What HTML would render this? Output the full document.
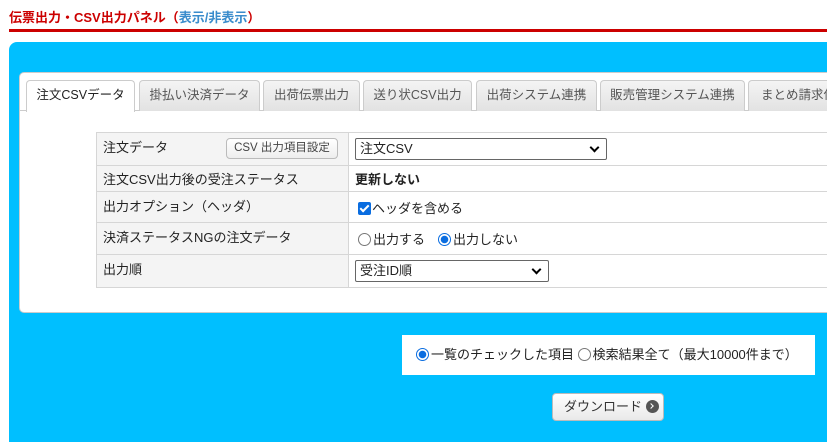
<!DOCTYPE html>
<html><head><meta charset="utf-8"><style>
*{box-sizing:border-box}
body{margin:0;width:827px;height:432px;overflow:hidden;background:#fff;font-family:"Liberation Sans","Noto Sans CJK JP",sans-serif;font-size:13px;color:#222;position:relative}
.title{position:absolute;left:9px;top:7px;font-size:13px;font-weight:bold;color:#c00}
.title span{color:#3a8ccc}
.rline{position:absolute;left:9px;top:29px;width:818px;height:3px;background:#c00}
.blue{position:absolute;left:9px;top:42px;width:830px;height:400px;background:#00bfff;border-radius:8px 0 0 0}
.inner{position:absolute;left:19px;top:72px;width:820px;height:241px;background:#fff;border:1px solid #ccc;border-radius:5px}
.tabs{position:absolute;left:0;top:0;width:100%;height:38px;}
.tab{position:absolute;top:7px;height:31px;border:1px solid #ccc;border-bottom:none;border-radius:4px 4px 0 0;background:linear-gradient(#f4f4f4,#e2e2e2);color:#555;text-align:center;line-height:29px;font-size:12.5px;white-space:nowrap;overflow:hidden}
.tab.act{background:#fff;color:#222;height:32px}
.tabline{position:absolute;left:0;top:37px;width:100%;height:1px;background:#ccc}
table{position:absolute;left:96px;top:132px;border-collapse:collapse;width:740px}
td{border:1px solid #d6d6d6;padding:0 6px;font-size:13px;vertical-align:middle}
td.l{background:#f4f4f4;width:252px;vertical-align:top;padding-top:4px}
.sel{display:inline-block;position:relative;height:22px;border:1px solid #666;border-radius:2px;padding-left:4px;line-height:20px;background:#fff}
.sel:after{content:"";position:absolute;right:8px;top:5px;width:5px;height:5px;border-right:2px solid #000;border-bottom:2px solid #000;transform:rotate(45deg)}
.btn{display:inline-block;border:1px solid #bbb;border-radius:4px;background:linear-gradient(#fff,#eee);font-size:11.5px;color:#444;padding:0 10px;line-height:19px}
.rad{display:inline-block;width:13px;height:13px;border:1px solid #777;border-radius:50%;vertical-align:-2px;margin-right:2px;background:#fff}
.rad.on{border:1px solid #0a6de0;background:radial-gradient(#0a6de0 0 3.5px,#fff 4px)}
.chk{display:inline-block;width:13px;height:13px;background:#0a6de0;border-radius:2px;vertical-align:-2px;position:relative;margin-right:1px}
.chk:after{content:"";position:absolute;left:4px;top:1px;width:3px;height:7px;border-right:2px solid #fff;border-bottom:2px solid #fff;transform:rotate(45deg)}
.wbox{position:absolute;left:402px;top:335px;width:413px;height:40px;background:#fff;line-height:40px;padding-left:14px;font-size:13px}
.dl{position:absolute;left:552px;top:393px;width:112px;height:28px;border:1px solid #bbb;border-radius:4px;background:linear-gradient(#fff,#e9e9e9);font-size:13px;color:#333;line-height:26px;padding-left:11px}
.dl i{display:inline-block;width:13px;height:13px;border-radius:50%;background:#555;vertical-align:-2px;margin-left:4px;position:relative}
.dl i:after{content:"";position:absolute;left:3px;top:4px;width:3px;height:3px;border-right:1.5px solid #fff;border-top:1.5px solid #fff;transform:rotate(45deg)}
</style></head><body>
<div class="title">伝票出力・CSV出力パネル（<span>表示/非表示</span>）</div>
<div class="rline"></div>
<div class="blue"></div>
<div class="inner">
 <div class="tabs">
  <div class="tabline"></div>
  <div class="tab act" style="left:6px;width:109px">注文CSVデータ</div>
  <div class="tab" style="left:119px;width:121px">掛払い決済データ</div>
  <div class="tab" style="left:243px;width:97px">出荷伝票出力</div>
  <div class="tab" style="left:343px;width:109px">送り状CSV出力</div>
  <div class="tab" style="left:456px;width:121px">出荷システム連携</div>
  <div class="tab" style="left:580px;width:145px">販売管理システム連携</div>
  <div class="tab" style="left:728px;width:100px;text-align:left;padding-left:12px">まとめ請求伝票</div>
 </div>
</div>
<table>
<tr style="height:33px"><td class="l">注文データ<span class="btn" style="float:right;margin-right:4px;margin-top:1px;width:112px;padding:0;text-align:center">CSV 出力項目設定</span></td><td><div class="sel" style="width:252px">注文CSV</div></td></tr>
<tr style="height:26px"><td class="l" style="padding-top:3px">注文CSV出力後の受注ステータス</td><td style="font-weight:bold">更新しない</td></tr>
<tr style="height:31px"><td class="l">出力オプション（ヘッダ）</td><td style="padding-left:9px"><span class="chk"></span>ヘッダを含める</td></tr>
<tr style="height:32px"><td class="l">決済ステータスNGの注文データ</td><td style="padding-left:9px"><span class="rad"></span>出力する　<span class="rad on"></span>出力しない</td></tr>
<tr style="height:33px"><td class="l">出力順</td><td><div class="sel" style="width:194px">受注ID順</div></td></tr>
</table>
<div class="wbox"><span class="rad on"></span>一覧のチェックした項目 <span class="rad"></span>検索結果全て（最大10000件まで）</div>
<div class="dl">ダウンロード<i></i></div>
</body></html>
